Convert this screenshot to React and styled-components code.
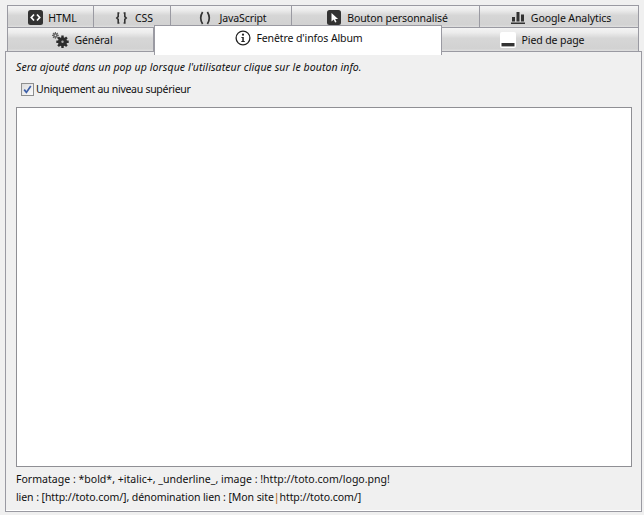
import styled, { createGlobalStyle } from "styled-components";

const GlobalStyle = createGlobalStyle`
  html, body {
    margin: 0;
    height: 100%;
    background: #f0f0f0;
    font-family: "Noto Sans", "Liberation Sans", sans-serif;
    font-size: 10.55px;
    color: #111;
  }
`;

const Page = styled.div`
  width: 644px;
  height: 515px;
  padding: 5px 2px 3px 5px;
  box-sizing: border-box;
  display: flex;
  flex-direction: column;
  overflow: hidden;
`;

const TabRows = styled.div`
  padding: 0 3px 0 2px;
  display: flex;
  flex-direction: column;
`;

const TabRow = styled.div`
  display: flex;
  height: ${(p) => p.$height}px;
`;

const Tab = styled.div`
  width: ${(p) => p.$width}px;
  box-sizing: border-box;
  display: flex;
  align-items: center;
  justify-content: center;
  gap: ${(p) => p.$gap || 6}px;
  padding-top: ${(p) => p.$top ?? 2}px;
  padding-left: 4px;
  border: 1px solid #9a9aa2;
  border-bottom: none;
  border-left-width: ${(p) => (p.$first ? 1 : 0)}px;
  background: linear-gradient(#f4f4f4 0, #ececec 20%, #d6d6d6 45%, #d2d2d2 90%, #e0e0e0 100%);
  letter-spacing: -0.12px;
  white-space: nowrap;
`;

const ActiveTab = styled(Tab)`
  position: relative;
  z-index: 2;
  height: 30px;
  margin-top: -2px;
  padding: 0 0 6px 2px;
  background: #fff;
  border-left-width: 1px;
  border-bottom: none;
`;

const Panel = styled.div`
  flex: 1;
  box-sizing: border-box;
  display: flex;
  flex-direction: column;
  border: 1px solid #9a9aa2;
  box-shadow: inset 0 -1px 0 #fff;
  padding: 7px 9px 5px 10px;
  background: #f0f0f0;
`;

const Hint = styled.div`
  font-style: italic;
  line-height: 17px;
  letter-spacing: 0.07px;
`;

const CheckRow = styled.label`
  display: flex;
  align-items: center;
  gap: 2px;
  margin: 5px 0 0 5px;
  height: 16px;
  letter-spacing: -0.3px;
`;

const CheckBox = styled.span`
  width: 11px;
  height: 11px;
  border: 1px solid #8e8f8f;
  background: linear-gradient(135deg, #dcdcdc, #fbfbfb);
  display: flex;
  align-items: center;
  justify-content: center;
`;

const TextArea = styled.div`
  flex: 1;
  margin-top: 10px;
  background: #fff;
  border: 1px solid #8f8f94;
`;

const HelpLine = styled.div`
  line-height: 18px;
  white-space: nowrap;
  letter-spacing: ${(p) => p.$tight || 0}px;
`;

const Help = styled.div`
  margin-top: 3px;
  display: flex;
  flex-direction: column;
`;

const Caret = styled.span`
  color: #a8620c;
`;

function HtmlIcon() {
  return (
    <svg width="15" height="15" viewBox="0 0 15 15">
      <rect width="15" height="15" rx="2.5" fill="#333" />
      <path d="M6 4.5 3.3 7.5 6 10.5M9 4.5l2.7 3-2.7 3" fill="none" stroke="#fff" strokeWidth="1.7" />
    </svg>
  );
}

function CursorIcon() {
  return (
    <svg width="14" height="15" viewBox="0 0 14 15">
      <rect width="14" height="15" rx="2.5" fill="#333" />
      <path d="M4.5 3v8.5l2.2-2 1.4 3 1.4-.6-1.3-3h2.9z" fill="#fff" />
    </svg>
  );
}

function BracesIcon() {
  return (
    <svg width="13" height="14" viewBox="0 0 13 14" fill="none" stroke="#333" strokeWidth="1.6">
      <path d="M4.4 2H3.2v3.6L1.8 7l1.4 1.4V12h1.2M8.6 2h1.2v3.6L11.2 7 9.8 8.4V12H8.6" />
    </svg>
  );
}

function ParensIcon() {
  return (
    <svg width="12" height="14" viewBox="0 0 12 14" fill="none" stroke="#333" strokeWidth="1.7">
      <path d="M3.6 1C1.4 4.5 1.4 9.5 3.6 13M8.4 1c2.2 3.5 2.2 8.5 0 12" />
    </svg>
  );
}

function BarsIcon() {
  return (
    <svg width="14" height="13" viewBox="0 0 14 13" fill="#333">
      <rect x="0" y="11.5" width="14" height="1.5" />
      <rect x="1" y="6" width="3" height="4.5" />
      <rect x="5.5" y="1" width="3" height="9.5" />
      <rect x="10" y="3.5" width="3" height="7" />
    </svg>
  );
}

function GearsIcon() {
  return (
    <svg width="17" height="16" viewBox="0 0 17 16">
      <g stroke="#2c2c2c" strokeWidth="2.4">
        <path d="M10.5 3.6v12.4M4.3 9.8h12.4M6.1 5.4l8.8 8.8M14.9 5.4l-8.8 8.8" />
      </g>
      <circle cx="10.5" cy="9.8" r="4.6" fill="#2c2c2c" />
      <circle cx="10.5" cy="9.8" r="1.2" fill="#aaa" />
      <g stroke="#666" strokeWidth="1.2">
        <path d="M3.4 0v6.8M0 3.4h6.8M1 1l4.8 4.8M5.8 1 1 5.8" />
      </g>
      <circle cx="3.4" cy="3.4" r="2.2" fill="#666" />
      <circle cx="3.4" cy="3.4" r=".8" fill="#ddd" />
    </svg>
  );
}

function InfoIcon() {
  return (
    <svg width="16" height="16" viewBox="0 0 16 16">
      <circle cx="8" cy="8" r="6.9" fill="none" stroke="#222" strokeWidth="1.3" />
      <circle cx="8" cy="4.7" r="1.1" fill="#222" />
      <path d="M6.4 7h2.4v4h1v1H6.3v-1h1V8H6.4z" fill="#222" />
    </svg>
  );
}

function FooterIcon() {
  return (
    <svg width="16" height="16" viewBox="0 0 16 16">
      <rect width="16" height="16" rx="2" fill="#fff" />
      <rect x="1.5" y="11" width="13" height="3.4" fill="#333" />
    </svg>
  );
}

const topTabs = [
  { label: "HTML", width: 87, icon: <HtmlIcon />, first: true, gap: 5 },
  { label: "CSS", width: 77, icon: <BracesIcon />, gap: 7 },
  { label: "JavaScript", width: 121, icon: <ParensIcon />, gap: 8 },
  { label: "Bouton personnalisé", width: 188, icon: <CursorIcon /> },
  { label: "Google Analytics", width: 159, icon: <BarsIcon /> },
];

export default function App() {
  return (
    <>
      <GlobalStyle />
      <Page>
        <TabRows>
          <TabRow $height={22}>
            {topTabs.map((tab) => (
              <Tab key={tab.label} $width={tab.width} $first={tab.first} $gap={tab.gap}>
                {tab.icon}
                <span>{tab.label}</span>
              </Tab>
            ))}
          </TabRow>
          <TabRow $height={24}>
            <Tab $width={147} $first $gap={5} $top={0}>
              <GearsIcon />
              <span>Général</span>
            </Tab>
            <ActiveTab $width={288} $gap={5}>
              <InfoIcon />
              <span>Fenêtre d'infos Album</span>
            </ActiveTab>
            <Tab $width={197} $gap={6} $top={0}>
              <FooterIcon />
              <span>Pied de page</span>
            </Tab>
          </TabRow>
        </TabRows>
        <Panel>
          <Hint>Sera ajouté dans un pop up lorsque l'utilisateur clique sur le bouton info.</Hint>
          <CheckRow>
            <CheckBox>
              <svg width="9" height="9" viewBox="0 0 9 9">
                <path d="M1.2 4.6 3.4 7.4 7.8 1" fill="none" stroke="#3c5fa8" strokeWidth="1.7" />
              </svg>
            </CheckBox>
            <span>Uniquement au niveau supérieur</span>
          </CheckRow>
          <TextArea />
          <Help>
            <HelpLine>Formatage : *bold*, +italic+, _underline_, image : !http://toto.com/logo.png!</HelpLine>
            <HelpLine $tight={-0.1}>
              lien : [http://toto.com/], dénomination lien : [Mon site<Caret>|</Caret>http://toto.com/]
            </HelpLine>
          </Help>
        </Panel>
      </Page>
    </>
  );
}
